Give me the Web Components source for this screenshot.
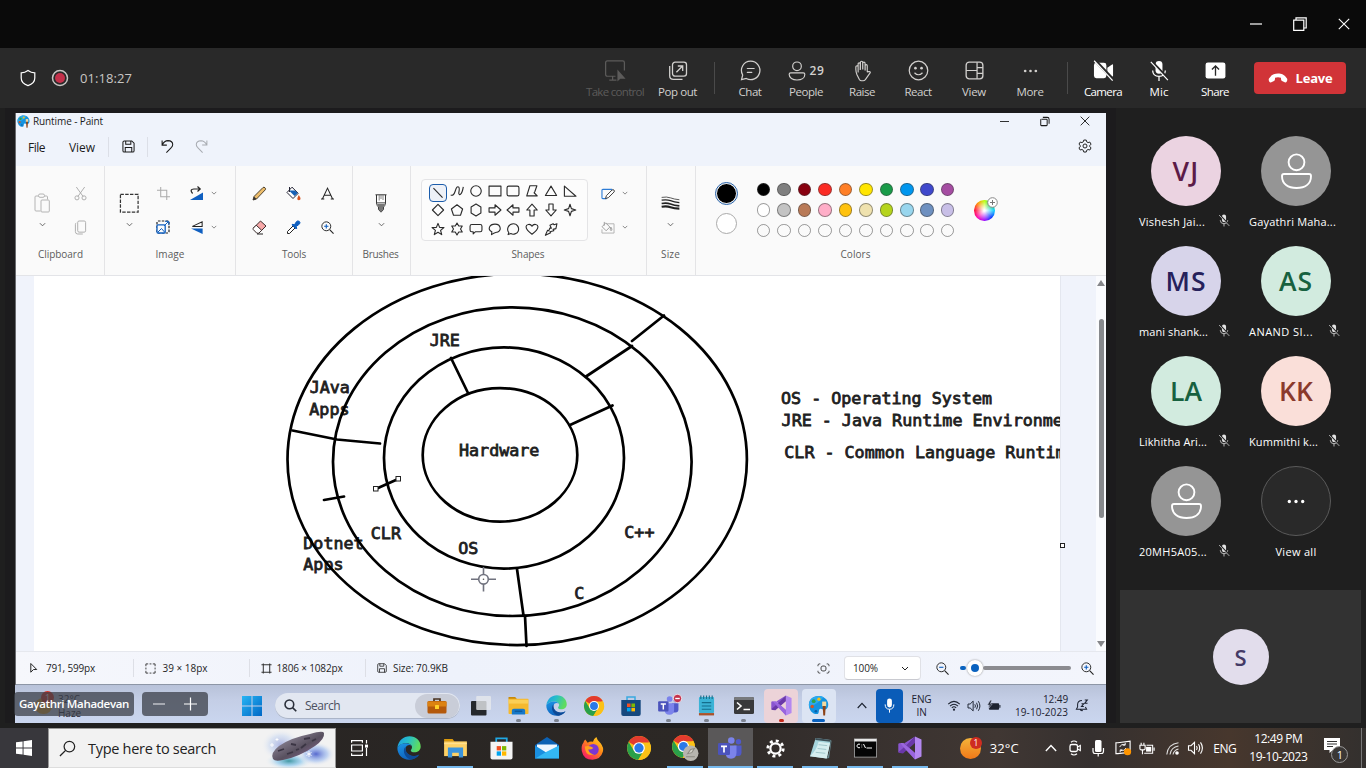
<!DOCTYPE html>
<html lang="en">
<head>
<meta charset="utf-8">
<title>Meeting</title>
<style>
html,body{margin:0;padding:0}
body{width:1366px;height:768px;overflow:hidden;background:#1f1f1f;font-family:"Open Sans","Noto Sans",sans-serif;font-size:12px;color:#fff}
</style>
</head>
<body>
<meeting-app></meeting-app>
<script>
const CHROME = `<circle cx="12" cy="12" r="11" fill="#fbc116"/><path d="M12 12L2.5 6.5A11 11 0 0 1 21.6 6.6Z" fill="#e33b2e"/><path d="M2.5 6.5A11 11 0 0 0 11.3 23L16.5 14.5 12 17 7 14Z" fill="#29a04a"/><path d="M12 7H21.8A11 11 0 0 1 11.3 23L16.5 14.5Z" fill="#fbc116"/><circle cx="12" cy="12" r="5.4" fill="#fff"/><circle cx="12" cy="12" r="4.3" fill="#2b79e8"/>`;
const STAR4 = 'M10 1.8L12 8 18.2 10 12 12 10 18.2 8 12 1.8 10 8 8Z';
const ICONS = {
  min: ['0 0 12 12', '<path d="M0 6H12" stroke="currentColor" stroke-width="1.2"/>'],
  restore: ['0 0 14 14', '<path d="M.7 3.2H10.8V13.3H.7ZM3 3V.8H13.2V11H11" fill="none" stroke="currentColor" stroke-width="1.2"/>'],
  restore11: ['0 0 12 12', '<path d="M3 3.6H8.2Q8.9 3.6 8.9 4.3V9.8Q8.9 10.5 8.2 10.5H2.6Q1.9 10.5 1.9 9.8V4.3Q1.9 3.6 2.6 3.6M4.2 1.5H9Q11 1.5 11 3.5V8.4" fill="none" stroke="currentColor" stroke-width="1.1"/>'],
  close: ['0 0 12 12', '<path d="M.8.8L11.2 11.2M11.2.8L.8 11.2" stroke="currentColor" stroke-width="1.1"/>'],
  shield: ['0 0 16 18', '<path d="M8 1.5C10 3 12 3.8 14.8 3.9V9C14.8 13 12 15.3 8 16.6 4 15.3 1.2 13 1.2 9V3.9C4 3.8 6 3 8 1.5Z" fill="none" stroke="currentColor" stroke-width="1.2"/>'],
  rec: ['0 0 18 18', '<circle cx="9" cy="9" r="7.5" fill="none" stroke="#c8c6c4" stroke-width="1.5"/><circle cx="9" cy="9" r="5" fill="#c4314b"/>'],
  control: ['0 0 24 24', '<path d="M12 18H3.5Q1.7 18 1.7 16.2V3.8Q1.7 2 3.5 2H19.5Q21.3 2 21.3 3.8V12M9 18V22M5.5 22H13" fill="none" stroke="currentColor" stroke-width="1.3"/><path d="M14 11V23.5L17 20.5H22.5Z" fill="currentColor"/>'],
  popout: ['0 0 20 20', '<rect x="4.5" y="1.2" width="14" height="14" rx="2.6" fill="none" stroke="currentColor" stroke-width="1.3"/><path d="M1.7 5V14.7Q1.7 18.4 5.4 18.4H14.5M8.4 11.2L14.6 5M9.8 5H14.7V9.9" fill="none" stroke="currentColor" stroke-width="1.3"/>'],
  chat: ['0 0 22 22', '<path d="M11.3 1.3A9.6 9.6 0 1 1 6.6 19.3L1.6 20.6 2.8 15.7A9.6 9.6 0 0 1 11.3 1.3ZM7.7 8.9H14.8M7.7 13H12.3" fill="none" stroke="currentColor" stroke-width="1.3" stroke-linecap="round"/>'],
  people: ['0 0 20 22', '<circle cx="10" cy="5.8" r="4.8" fill="none" stroke="currentColor" stroke-width="1.3"/><path d="M3 13H17Q18.7 13 18.7 14.6C18.7 18.8 15 21 10 21S1.3 18.8 1.3 14.6Q1.3 13 3 13Z" fill="none" stroke="currentColor" stroke-width="1.3"/>'],
  raise: ['0 0 20 23', '<path d="M5.4 13V4.2Q5.4 3 6.5 3T7.6 4.2V10.5M7.8 10V2.4Q7.8 1.2 9 1.2T10.2 2.4V10M10.3 10V3.4Q10.3 2.2 11.5 2.2T12.7 3.4V11M12.8 11V6Q12.8 4.8 13.9 4.8T15 6V12.4L17 12Q18.8 12.3 18 13.5L13 20.5Q12 21.8 10.6 21.8H9Q7.5 21.8 6.7 20.5L4.2 15.5Q3 12.5 3 10V7Q3 6 4.2 6L5.4 6.3" fill="none" stroke="currentColor" stroke-width="1.2" stroke-linejoin="round"/>'],
  react: ['0 0 22 22', '<circle cx="11" cy="11" r="9.7" fill="none" stroke="currentColor" stroke-width="1.3"/><circle cx="7.8" cy="8.6" r="1.4" fill="currentColor"/><circle cx="14.2" cy="8.6" r="1.4" fill="currentColor"/><path d="M6.8 13.3Q11 17.6 15.2 13.3" fill="none" stroke="currentColor" stroke-width="1.3"/>'],
  view: ['0 0 20 20', '<rect x="1.2" y="1.2" width="17.6" height="17.6" rx="3.3" fill="none" stroke="currentColor" stroke-width="1.4"/><path d="M12.7 1.2V18.8M1.2 10H12.7M12.7 7H18.8M12.7 13H18.8" stroke="currentColor" stroke-width="1.3"/>'],
  dots: ['0 0 24 6', '<circle cx="4" cy="3" r="2" fill="currentColor"/><circle cx="12" cy="3" r="2" fill="currentColor"/><circle cx="20" cy="3" r="2" fill="currentColor"/>'],
  camoff: ['0 0 24 22', '<path d="M4.5 3H12.5Q15 3 15 5.5V16.5Q15 19 12.5 19H4.5Q2 19 2 16.5V5.5Q2 3 4.5 3ZM16 8.2L21 4.6Q22 4.2 22 5.2V16.8Q22 17.8 21 17.4L16 13.8Z" fill="currentColor"/><path d="M3.5.8L23.2 21.6" stroke="#292929" stroke-width="3.2"/><path d="M2.2.8L21.6 21.6" stroke="currentColor" stroke-width="1.3"/>'],
  micoff: ['0 0 22 24', '<rect x="7.2" y="1" width="7.6" height="14" rx="3.8" fill="currentColor"/><path d="M4 11.5Q4.3 18 11 18T18 11.5M11 18V23" fill="none" stroke="currentColor" stroke-width="1.4"/><path d="M3.5 1.8L22 21.5" stroke="#242424" stroke-width="2.6"/><path d="M2 2L20.8 22" stroke="currentColor" stroke-width="1.3"/>'],
  share: ['0 0 22 18', '<rect x=".5" y=".5" width="21" height="17" rx="2.4" fill="currentColor"/><path d="M11 14.5V4.5M7.2 8L11 4.2 14.8 8" fill="none" stroke="#292929" stroke-width="1.4"/>'],
  phone: ['0 0 20 10', '<path d="M1 5.500C3.500 1.500 6.500.5 10 .5S16.500 1.500 19 5.500Q19.800 7 18.500 9Q17.800 9.800 16.700 9.300L14 8Q13 7.400 13 6L13 4.800Q10 3.800 7 4.800L7 6Q7 7.400 6 8L3.300 9.300Q2.200 9.800 1.500 9Q.2 7 1 5.500Z" fill="currentColor"/>'],
  paint: ['0 0 24 24', '<path d="M12 1C5.500 1 1 5.500 1 11C1 17 5 21.800 10 21.800C13.500 21.800 11.500 17.500 13.500 16C15.500 14.700 18 18 21 16C24 14 23.700 9 21.300 5.500C19 2.500 16 1 12 1Z" fill="#1593e0"/><path d="M12 1C5.500 1 1 5.500 1 11C1 12 1.200 13 1.500 14Q10 11 18 2.600Q15.500 1 12 1Z" fill="#2aa9ee"/><circle cx="6.500" cy="7" r="2.200" fill="#2fa14c"/><circle cx="12.500" cy="4.800" r="1.900" fill="#f2c218"/><circle cx="4.800" cy="13" r="2" fill="#d4531f"/><circle cx="9" cy="18.500" r="1.500" fill="#0b5fa8"/><path d="M16.200 7.500H20.800V13H16.200Z" fill="#f3d9a0"/><path d="M16.700 12.500H20.300L19.500 23.500H17.500Z" fill="#8d4318"/>'],
  save: ['0 0 14 14', '<path d="M1 2.500Q1 1 2.500 1H10.500L13 3.500V11.500Q13 13 11.500 13H2.500Q1 13 1 11.500ZM4 1V4.500H9.500V1M3.500 13V8H10.500V13" fill="none" stroke="currentColor" stroke-width="1.100"/>'],
  undo: ['0 0 14 15', '<path d="M1.200 1V6H6.300M1.400 5.600Q3.500 1.400 7.500 1.200 12.600 1.400 12.600 5.400 12.600 7 11.300 8.400L5.800 14" fill="none" stroke="currentColor" stroke-width="1.150"/>'],
  redo: ['0 0 14 15', '<path d="M12.800 1V6H7.700M12.600 5.600Q10.500 1.400 6.500 1.200 1.400 1.400 1.400 5.400 1.400 7 2.700 8.400L8.200 14" fill="none" stroke="currentColor" stroke-width="1.100"/>'],
  gear: ['0 0 16 16', '<path d="M6.600 1.200H9.400L9.900 3.200 11.500 4.100 13.500 3.500 14.900 5.900 13.500 7.300V8.800L14.900 10.200 13.500 12.600 11.500 12 9.900 12.900 9.400 14.900H6.600L6.100 12.900 4.500 12 2.500 12.600 1.100 10.200 2.500 8.800V7.300L1.100 5.900 2.500 3.500 4.500 4.100 6.100 3.200Z" fill="none" stroke="currentColor" stroke-width="1.100" stroke-linejoin="round"/><circle cx="8" cy="8" r="2.300" fill="none" stroke="currentColor" stroke-width="1.100"/>'],
  paste: ['0 0 16 20', '<path d="M5 3H2Q1 3 1 4V17Q1 18 2 18H6.500M10 3H12.500Q13.500 3 13.500 4V6.500" fill="none" stroke="#b4b4b4"/><rect x="4.500" y="1" width="6" height="3.300" rx="1.500" fill="#fafafa" stroke="#b4b4b4"/><rect x="7" y="7" width="8.300" height="12" rx="1" fill="#fafafa" stroke="#b4b4b4"/>'],
  cut: ['0 0 14 16', '<path d="M2.500 1L9.800 11.200M11.500 1L4.200 11.200" stroke="#aaa"/><circle cx="3.200" cy="12.700" r="2.200" fill="none" stroke="#aaa"/><circle cx="10.800" cy="12.700" r="2.200" fill="none" stroke="#aaa"/>'],
  copy: ['0 0 14 16', '<rect x="4" y="1" width="8.500" height="12" rx="1.500" fill="none" stroke="#aaa"/><path d="M2.500 3Q1.500 3.500 1.500 5V12.500Q1.500 15 4 15H9.500" fill="none" stroke="#aaa"/>'],
  chev: ['0 0 8 5', '<path d="M1 1L4 4 7 1" fill="none" stroke="currentColor"/>'],
  chevup: ['0 0 14 9', '<path d="M1 8L7 1.500 13 8" fill="none" stroke="currentColor" stroke-width="1.600"/>'],
  select: ['0 0 22 22', '<rect x="1.500" y="1.500" width="18.500" height="18.500" fill="none" stroke="#333" stroke-width="1.300" stroke-dasharray="3.600 1.400"/>'],
  crop: ['0 0 14 14', '<path d="M4 0V10.500H14M0 3.500H10.500V14" fill="none" stroke="#aaa" stroke-width="1.100"/>'],
  resize: ['0 0 14 14', '<rect x="1" y="1" width="12" height="12" rx="1" fill="none" stroke="#222" stroke-width="1.200" stroke-dasharray="2.500 1.300"/><rect x="1" y="4.800" width="8.200" height="8.200" rx="1" fill="#fafafa" stroke="#0f5fc0" stroke-width="1.300"/><path d="M2 12L5.500 8.500 8.500 12M8 6L12.500 1.500M9 1.300H12.800V5" fill="none" stroke="#0f5fc0"/>'],
  rotate: ['0 0 14 14', '<path d="M13 6.500V14H0Z" fill="#0f5fc0"/><path d="M2.600 7.500Q-1 3.300 4 3H10M7.500.5L10.200 3 7.500 5.500" fill="none" stroke="#222" stroke-width="1.200"/>'],
  flip: ['0 0 14 14', '<path d="M12 .9V5.800H1.500Z" fill="none" stroke="#222" stroke-width="1.100"/><path d="M12.500 8V14L0 8Z" fill="#0f5fc0"/>'],
  pencil: ['0 0 15 15', '<path d="M1 14L2 10.500 11 1.500Q12 .7 13 1.800 14 2.800 13.300 3.800L4.500 13Z" fill="#edbd6b" stroke="#3b3222" stroke-width=".9"/><path d="M1 14L2 10.500 4.500 13Z" fill="#333"/>'],
  bucket: ['0 0 15 15', '<path d="M6 1.200L12.200 7.300 7 12.500 1 6.500Z" fill="#fff" stroke="#223" stroke-width="1"/><path d="M3 4.600L8.500 10 11.800 7 9 4.500Z" fill="#1560b4"/><path d="M3.500 1V6" stroke="#223"/><path d="M12.800 9Q15 12 14.300 13.500 12.800 15 11.400 13.500 11 12 12.800 9Z" fill="#d9531e"/>'],
  letterA: ['0 0 14 14', '<path d="M1.500 13L7 1.200 12.500 13M3.400 9H10.600M0 13H3.500M10.500 13H14" fill="none" stroke="#222" stroke-width="1.100"/>'],
  eraser: ['0 0 15 15', '<path d="M8.500 1L14 6 7 13 1.500 8Z" fill="#f7a8a8" stroke="#3a2b2b"/><path d="M4.200 5.200L9.700 10.300 6.800 13.200H4.800L1.200 9.500Q.8 8.700 1.400 8Z" fill="#fff" stroke="#3a2b2b"/><path d="M5 14H11" stroke="#222"/>'],
  picker: ['0 0 15 15', '<path d="M7 6L1.500 11.500V13.500H3.500L9 8Z" fill="#fff" stroke="#222"/><path d="M6 4.800L10.200 9 11 8 9.800 6.800 13.500 4Q14.600 2.500 13.200 1.300 11.500.4 10.500 1.600L8.200 5.200 7 4Z" fill="#0f5fc0" stroke="#0f5fc0"/>'],
  zoomin: ['0 0 14 14', '<circle cx="5.700" cy="5.700" r="4.800" fill="none" stroke="#222"/><path d="M9.300 9.300L13.500 13.500" stroke="#222" stroke-width="1.200"/><path d="M5.700 3.400V8M3.400 5.700H8" stroke="#0f5fc0" stroke-width="1.200"/>'],
  zoomout: ['0 0 14 14', '<circle cx="5.700" cy="5.700" r="4.800" fill="none" stroke="#222"/><path d="M9.300 9.300L13.500 13.500" stroke="#222" stroke-width="1.200"/><path d="M3.400 5.700H8" stroke="#0f5fc0" stroke-width="1.200"/>'],
  brush: ['0 0 12 19', '<path d="M.5.800H11.500M1.500 1V9Q2 12 3.500 13V15.500L6 18.200 8.500 15.500V13Q10 12 10.500 9V1" fill="#fff" stroke="#333"/><path d="M1.800 8.500H10.200M4.200 1V6.500M6 1V5M8 1V6" stroke="#666" stroke-width=".8"/><path d="M2 9.500H10Q9.500 12 8.200 13V15.500L6 18 3.800 15.500V13Q2.500 12 2 9.500Z" fill="#777"/>'],
  outline: ['0 0 15 14', '<path d="M6 12.500H2Q1 12.500 1 11.500V3.500Q1 2.500 2 2.500H12" fill="none" stroke="#2d7cd6" stroke-width="1.200"/><path d="M4.800 12.500L5.800 9.300 11.800 3.300Q13 2.400 14 3.400 14.800 4.500 14 5.400L8 11.400Z" fill="#fff" stroke="#333"/>'],
  fill: ['0 0 15 14', '<path d="M6 3H14V13H1V9" fill="none" stroke="#b0b0b0"/><path d="M5 2L9.500 6.500 5.500 10.500 1.200 6.200ZM3.500 1V5M10.500 6.500Q12.500 9 11.500 10 10.300 10.500 9.800 9.500Z" fill="none" stroke="#999"/>'],
  size: ['0 0 20 15', '<path d="M.5 1.500Q6 .5 10 2T19.500 4" stroke-width=".8" stroke="#222" fill="none"/><path d="M.5 4.500Q6 3.500 10 5T19.500 7" stroke-width="1.300" stroke="#222" fill="none"/><path d="M.5 8Q6 7 10 8.500T19.500 10.500" stroke-width="1.800" stroke="#222" fill="none"/><path d="M.5 11.500Q6 10.500 10 12T19.500 13.500" stroke-width="2.200" stroke="#222" fill="none"/>'],
  cursor: ['0 0 10 13', '<path d="M2 1.500L8.600 8.200H5L2 11.200Z" fill="none" stroke="#222" stroke-width="1.100"/>'],
  selsmall: ['0 0 12 12', '<path d="M1 3.500V1H3.500M8.500 1H11V3.500M11 8.500V11H8.500M3.500 11H1V8.500M5 1H7M5 11H7M1 5V7M11 5V7" fill="none" stroke="#333"/>'],
  canvas: ['0 0 12 12', '<path d="M2.500.5V11.500M9.500.5V11.500M.5 2H11.500M.5 10H11.500" stroke="#333" stroke-width="1.100"/>'],
  fit: ['0 0 14 12', '<path d="M1 3.500V2.500Q1 1 2.500 1H3.500M10.500 1H11.500Q13 1 13 2.500V3.500M13 8.500V9.500Q13 11 11.500 11H10.500M3.500 11H2.500Q1 11 1 9.500V8.500" fill="none" stroke="#333"/><rect x="4.300" y="3.300" width="5.400" height="5.400" rx="2" fill="none" stroke="#333"/>'],
  person: ['0 0 31 36', '<circle cx="15.500" cy="9.300" r="7.900" fill="none" stroke="#fff" stroke-width="1.900"/><path d="M3 21H28Q30 21 30 23C30 31 24 35 15.500 35S1 31 1 23Q1 21 3 21Z" fill="none" stroke="#fff" stroke-width="1.900"/>'],
  win11: ['0 0 20 20', '<defs><linearGradient id="g" x2="1" y2="1"><stop stop-color="#28b5f4"/><stop offset="1" stop-color="#0067c5"/></linearGradient></defs><path d="M0 0H9.500V9.500H0ZM10.500 0H20V9.500H10.500ZM0 10.500H9.500V20H0ZM10.500 10.500H20V20H10.500Z" fill="url(#g)"/>'],
  win10: ['0 0 17 17', '<path d="M0 2.500L7 1.500V8H0ZM8 1.300L17 0V8H8ZM0 9H7V15.500L0 14.500ZM8 9H17V17L8 15.700Z" fill="#fff"/>'],
  search: ['0 0 14 14', '<circle cx="5.800" cy="5.800" r="4.700" fill="none" stroke="currentColor" stroke-width="1.700"/><path d="M9.200 9.200L13.200 13.200" stroke="currentColor" stroke-width="1.800"/>'],
  search10: ['0 0 18 18', '<circle cx="11" cy="7" r="5.600" fill="none" stroke="currentColor" stroke-width="1.300"/><path d="M7 11L1 17" stroke="currentColor" stroke-width="1.400"/>'],
  bag: ['0 0 20 16', '<path d="M7 3V1H13V3" fill="none" stroke="#4a3320" stroke-width="1.700"/><rect x=".5" y="3" width="19" height="12.500" rx="1.500" fill="#b4590b"/><path d="M.5 3.500H19.500V8.500H.5Z" fill="#dc8211"/><rect x="8" y="7" width="4" height="4" rx=".6" fill="#ffd028"/>'],
  tasks11: ['0 0 20 20', '<rect y="5" width="15.500" height="14.500" rx="1" fill="#25282c"/><rect x="5.200" y="0" width="14.800" height="14" rx="1" fill="#e6e8ec" opacity=".8"/>'],
  folder: ['0 0 22 20', '<path d="M.5 1H7.500L9.500 3.500H.5Z" fill="#c88a08"/><rect x=".5" y="3" width="21" height="16" rx=".8" fill="#f5b92e"/><path d="M.5 4H21V8H.5Z" fill="#fbcf55"/><path d="M4 19.500V15.500Q4 13.500 6 13.500H16Q18 13.500 18 15.500V19.500Z" fill="#1678c8"/><path d="M7 16H15" stroke="#0d4b86"/>'],
  folder10: ['0 0 24 20', '<path d="M0 0H9L11 3H0Z" fill="#dc9a0c"/><path d="M0 2.500H24V18H0Z" fill="#fdd165"/><path d="M0 4H24V5.500H0Z" fill="#ffe090"/><path d="M4 19.500V9H20V19.500H15.500V14.500H8.500V19.500Z" fill="#3a94dc"/>'],
  edge: ['0 0 24 24', '<defs><linearGradient id="a" x2="1" y2=".3"><stop stop-color="#1c9be6"/><stop offset=".5" stop-color="#27bfc8"/><stop offset="1" stop-color="#5fdc5f"/></linearGradient><linearGradient id="b" y2="1" x2=".4"><stop stop-color="#1b95e6"/><stop offset="1" stop-color="#0f62bd"/></linearGradient></defs><path d="M.4 11.500C1.500 4.500 6.500.3 12.500.3C19 .3 23.700 5 23.700 10.500C23.700 14.500 20.500 16.300 17.500 16.300C15 16.300 13.600 15.400 13.800 14.200C14 13.400 15 13 15 11.200C15 9 12.500 7.300 9.500 7.300C5 7.300 2 9 .4 11.500Z" fill="url(#a)"/><path d="M.4 11.500C2 8.800 5.500 7.200 9.300 7.300C12 7.500 14 8.600 14.700 10C13.500 8.800 11.500 8.700 10 9.800C8.500 11 8.200 13 8.800 15C10 18.500 13.500 20.300 17 20.300C19 20.300 21 19.500 22.300 18.600C20 22 16 24 12 23.800C5.500 23.700 0 18.500.4 11.500Z" fill="url(#b)"/><path d="M8.600 10.500C6.500 12.500 6.300 16 8 19C9.500 21.500 11.500 23 14 23.600C17.500 23.200 20.500 21.300 22.300 18.600C18 21 12.500 20 10 16.800C8.500 14.800 8.200 12.500 8.600 10.500Z" fill="#0d4a96"/>'],
  chrome: ['0 0 24 24', CHROME],
  chrome2: ['0 0 27 27', CHROME + '<circle cx="19" cy="18.500" r="7.500" fill="#b7b5af"/><path d="M16 19L19 15 22.500 14 20 18ZM14.500 22H23" stroke="#8b8981" fill="#d6d4cc"/>'],
  store11: ['0 0 20 20', '<path d="M6 4V1H14V4" fill="none" stroke="#3aa9e0" stroke-width="1.500"/><path d="M.3 4H19.700V18Q19.700 20 17.700 20H2.300Q.3 20 .3 18Z" fill="#16487e"/><path d="M6 7.500H9.600V11H6Z" fill="#f25022"/><path d="M10.400 7.500H14V11H10.400Z" fill="#7fba00"/><path d="M6 11.800H9.600V15.400H6Z" fill="#00a4ef"/><path d="M10.400 11.800H14V15.400H10.400Z" fill="#ffb900"/>'],
  store10: ['0 0 24 24', '<path d="M6.500 6V1.500H17.500V6" fill="none" stroke="#20a8e4" stroke-width="1.800"/><path d="M.5 5H23.500V21.500Q23.500 23.500 21.500 23.500H2.500Q.5 23.500 .5 21.500Z" fill="#f4f4f4"/><path d="M7 9.500H11.500V14H7Z" fill="#f25022"/><path d="M12.500 9.500H17V14H12.500Z" fill="#7fba00"/><path d="M7 15H11.500V19.500H7Z" fill="#00a4ef"/><path d="M12.500 15H17V19.500H12.500Z" fill="#ffb900"/>'],
  teams: ['0 0 24 22', '<circle cx="20.500" cy="4.800" r="2.700" fill="#5059c9"/><circle cx="13.300" cy="3.500" r="3.300" fill="#7b83eb"/><path d="M16 8.500H23.500V15.500Q23.500 19 20 19H16Z" fill="#5059c9"/><path d="M7.500 8.500H18.500V15.500Q18.500 21.700 13 21.700T7.500 15.500Z" fill="#7b83eb"/><rect y="6" width="12" height="12" rx="1.200" fill="#4b53bc"/><path d="M3 9.300H9M6 9.300V15.500" stroke="#fff" stroke-width="1.700"/>'],
  noentry: ['0 0 10 10', '<circle cx="5" cy="5" r="4.600" fill="#c4314b" stroke="#fff" stroke-width=".8"/><path d="M2.500 5H7.500" stroke="#fff" stroke-width="1.500"/>'],
  notepad11: ['0 0 18 22', '<rect x="1" y="2" width="16" height="17" rx="1" fill="#3bb3d6"/><path d="M1 19H17V21.500H1Z" fill="#a9532c"/><path d="M4 8H14M4 11.500H14M4 15H14" stroke="#146d8c" stroke-width="1.200"/><path d="M3 .5V4M6 .5V4M9 .5V4M12 .5V4M15 .5V4" stroke="#1d6f8b" stroke-width="1.200"/>'],
  terminal: ['0 0 20 17', '<rect width="20" height="17" rx="1.500" fill="#38393b"/><path d="M0 1.500Q0 0 1.500 0H18.500Q20 0 20 1.500V3H0Z" fill="#77797c"/><path d="M3 5.500L7 9 3 12.500M9.500 12.500H16" fill="none" stroke="#fff" stroke-width="1.600"/>'],
  vs: ['0 0 24 24', '<path d="M17 .5L23.500 3.500V20.500L17 23.500Z" fill="#b488f0"/><path d="M17 .5L5 14.500 2 17 .3 16.200V7.800L2 7 5.500 9.800 17 23.500V17L6 7.500Z" fill="#8a55d0"/><path d="M17 .5V7L5 17.500 2 17 .3 16.200 8 9.500Z" fill="#6a38a8"/><path d="M17 23.500V17L5.500 7 2 7 8 14Z" fill="#9a66df"/>'],
  mail: ['0 0 24 22', '<path d="M0 8L12 0 24 8V21.500H0Z" fill="#0c62b4"/><path d="M2 7.500H22V14L12 17 2 14Z" fill="#eef7ff"/><path d="M0 8.500L12 16 0 21.500Z" fill="#1a8fe0"/><path d="M24 8.500V21.500H0L12 14.500Z" fill="#33b8f5"/>'],
  firefox: ['0 0 24 24', '<defs><linearGradient id="f" x1="1" x2=".2" y2="1"><stop stop-color="#ffe226"/><stop offset=".45" stop-color="#ff8a16"/><stop offset="1" stop-color="#f5156c"/></linearGradient></defs><path d="M4.500 2.500L7 6Q9.500 4 12.500 5 13 2 16 0 17 4 20.500 6.500 24 11 22.800 15.500 20.500 23.500 12 23.800 2.500 23.500.8 14.500 0 9 2.500 6 2.800 4 4.500 2.500Z" fill="url(#f)"/><circle cx="12.700" cy="13" r="5.800" fill="#7a36d2"/><path d="M4 10Q9 8.500 13 11.500 10.500 13.500 7.500 13 9 18 14 18 9 20 6 17 4 14 4 10Z" fill="#ffa01c"/>'],
  settings10: ['0 0 20 20', '<g fill="none" stroke="#fff"><circle cx="10" cy="10" r="5.400" stroke-width="2.300"/><circle cx="10" cy="10" r="8.100" stroke-width="3" stroke-dasharray="3.100 3.260"/></g>'],
  notepad10: ['0 0 24 24', '<path d="M7 1L22.500 3 18.500 22.500 1 20Z" fill="#a6d4dc"/><path d="M7 1L22.500 3 22 5 6.500 3Z" fill="#3d5058"/><path d="M10 5L22 6.500 18.500 22.500 1 20Q8 14 10 5Z" fill="#d6eef0"/><path d="M18.500 22.500Q22 16 22.500 3L23.500 4 21 22Z" fill="#668890"/><path d="M10 8L19 9M9 12L18 13M7 16L17 17" stroke="#87b4ba" stroke-width=".7"/>'],
  cmd: ['0 0 23 19', '<rect x=".4" y=".4" width="22.200" height="18.200" fill="#050505" stroke="#a8a8a8" stroke-width=".8"/><path d="M.5.5H22.500V3H.5Z" fill="#e8e8e8"/><path d="M6 5.700H4Q3 6.500 3 7.500T4 9.200H6M7.500 6.500H8.200M7.500 8.500H8.200M9.500 5.500L11.500 9.500M12.500 9.500H18" stroke="#fff" fill="none"/>'],
  taskview: ['0 0 17 16', '<path d="M.6 2.800V.6H11.400V2.800M.6 5H11.400V11H.6ZM.6 13.200V15.400H11.400V13.200M15.500 0V3.500M15.500 8V16" fill="none" stroke="#fff" stroke-width="1.200"/><rect x="14" y="4.600" width="3" height="3" fill="#fff"/>'],
  mic: ['0 0 14 20', '<rect x="3.800" y=".5" width="6.400" height="12" rx="3.200" fill="currentColor"/><path d="M1.200 8.500Q1.200 15 7 15T12.800 8.500M7 15V19.500" fill="none" stroke="currentColor" stroke-width="1.300"/>'],
  wifi: ['0 0 14 12', '<path d="M.7 4.500Q7-1.500 13.300 4.500M2.600 6.600Q7 2.500 11.400 6.600M4.600 8.600Q7 6.300 9.400 8.600" fill="none" stroke="currentColor" stroke-width="1.100"/><circle cx="7" cy="10.500" r="1.200" fill="currentColor"/>'],
  vol: ['0 0 16 14', '<path d="M1 4.700H3.500L7 1.300V12.700L3.500 9.300H1Z" fill="none" stroke="currentColor" stroke-width="1.100"/><path d="M9 5Q10.400 7 9 9M11 3.200Q13.400 7 11 10.800M13 1.400Q16.800 7 13 12.600" fill="none" stroke="currentColor" stroke-width="1.100"/>'],
  batt11: ['0 0 15 11', '<rect x="2" y="3" width="11" height="7" rx="1" fill="currentColor"/><path d="M13.800 5V8" stroke="currentColor" stroke-width="1.200"/><path d="M3.500 0L.5 5H3L2 8.500 5.500 4H3.500L5 0Z" fill="currentColor" stroke="#c8d0e6" stroke-width=".5"/>'],
  bell: ['0 0 14 14', '<path d="M7.500 1.500Q2.800 1.700 2.800 6V8.500L1.500 11H12.500L11.200 8.500M5.500 11Q6 13 8.500 12.500M7 5H9.500L7 8H9.500M10.500 1H13.300L10.500 4.500H13.500" fill="none" stroke="currentColor" stroke-width="1.100"/>'],
  meet: ['0 0 12 16', '<rect x="1" y="4.500" width="7.500" height="7" rx="1.800" fill="none" stroke="#fff" stroke-width="1.300"/><path d="M8.500 7L11.300 5.500V10.500L8.500 9M2 2.200Q5-.2 8 2.200M2 13.800Q5 16.200 8 13.800" fill="none" stroke="#fff" stroke-width="1.200"/>'],
  micw: ['0 0 12 17', '<rect x="3" y="0" width="6.500" height="12" rx="1.500" fill="#fff"/><path d="M1 8V11Q1 13.500 3 13.500H9.500Q11.500 13.500 11.500 11V8M6.200 13.500V16.500" fill="none" stroke="#fff" stroke-width="1.200"/>'],
  sync: ['0 0 18 16', '<path d="M1 2.500H3L16 .8V12.500L3 14H1Z" fill="none" stroke="#fff" stroke-width="1.200"/><path d="M5 7Q6.500 3.500 10.500 4.500M10.800 2.500V5H8.300M11.500 8Q10 11.500 6 10.500M5.500 12.500V10H8" fill="none" stroke="#fff"/><circle cx="13.300" cy="12" r="3.800" fill="#ff9500"/>'],
  plug: ['0 0 17 13', '<path d="M1 3H6.500V6.500Q6.500 8 5 8H2.500Q1 8 1 6.500ZM2.300 3V.5M5.200 3V.5M3.700 8V12.500" fill="none" stroke="#fff" stroke-width="1.200"/><path d="M8 3H14.500V11.500H5.500" fill="none" stroke="#fff" stroke-width="1.100"/><rect x="7.500" y="4.800" width="5.500" height="5" fill="#fff"/><path d="M16 5.500V9" stroke="#fff" stroke-width="1.300"/>'],
  wifi10: ['0 0 13 13', '<path d="M.8 12.500Q2 2 12.500.8M4 12.500Q5 5.200 12.500 4M7 12.500Q7.800 8.200 12.500 7" fill="none" stroke="#ddd" stroke-width="1.100"/><circle cx="11" cy="11" r="1.800" fill="#fff"/>'],
  note: ['0 0 16 15', '<path d="M0 0H16V12H9L5.500 15V12H0Z" fill="#fff"/><path d="M3 3.500H13M3 6H13M3 8.500H9" stroke="#333" stroke-width="1"/>'],
  saucer: ['0 0 72 38', '<defs><radialGradient id="h"><stop stop-color="#2f8f9c" stop-opacity=".9"/><stop offset=".5" stop-color="#8cc8ee" stop-opacity=".7"/><stop offset="1" stop-color="#f2f2f2" stop-opacity="0"/></radialGradient><radialGradient id="k"><stop stop-color="#4f62cc" stop-opacity=".95"/><stop offset=".6" stop-color="#9dbcf0" stop-opacity=".6"/><stop offset="1" stop-color="#f2f2f2" stop-opacity="0"/></radialGradient><linearGradient id="i" y2="1"><stop stop-color="#aaa3b5"/><stop offset=".55" stop-color="#58505f"/><stop offset="1" stop-color="#9a6ca6"/></linearGradient></defs><ellipse cx="18" cy="16" rx="20" ry="16" fill="url(#k)" opacity=".45"/><ellipse cx="26" cy="32" rx="24" ry="9" fill="url(#h)"/><ellipse cx="53" cy="25" rx="19" ry="12" fill="url(#k)"/><path d="M10 30Q7 24 16 17 27 9 47 5 60 1 61 4 62 10 52 17 36 28 20 31 12 33 10 30Z" fill="url(#i)"/><path d="M15 22L21 20M28 15L33 16M41 10L47 9M24 25L30 23M38 19L43 15M33 21L36 20M49 12L53 10" stroke="#3b3544" stroke-width="1.800"/><path d="M46 22V28M43.500 23.500L48.500 26.500M43.500 26.500L48.500 23.500M9 14V18M7 16H11M14 9V12M12.500 10.500H15.500" stroke="#fff" stroke-width=".9"/>'],
  s_line: ['0 0 20 20', '<path d="M3.500 3L16.500 16.500"/>'],
  s_curve: ['0 0 20 20', '<path d="M1 15.500Q5 18 7.500 10T12.500 4.500Q14 6 12.500 13C13 17 17 16 19 4"/>'],
  s_oval: ['0 0 20 20', '<circle cx="10" cy="10" r="7.500"/>'],
  s_rect: ['0 0 20 20', '<rect x="1.500" y="3" width="17" height="14"/>'],
  s_rrect: ['0 0 20 20', '<rect x="1.500" y="3" width="17" height="14" rx="2.500"/>'],
  s_poly: ['0 0 20 20', '<path d="M7 2.500H17L14 11 13 12.500 17.500 17H2.500Z"/>'],
  s_tri: ['0 0 20 20', '<path d="M10 3L18 16.500H2Z"/>'],
  s_rtri: ['0 0 20 20', '<path d="M2 3V17.500H18.500Z"/>'],
  s_dia: ['0 0 20 20', '<path d="M10 2L18 10 10 18 2 10Z"/>'],
  s_pent: ['0 0 20 20', '<path d="M10 2.500L18 8.500 15 17.500H5L2 8.500Z"/>'],
  s_hex: ['0 0 20 20', '<path d="M10 1.500L17 5.800V14.200L10 18.500 3 14.200V5.800Z"/>'],
  s_ar: ['0 0 20 20', '<path d="M1.500 7H10V2.500L18.500 10 10 17.500V13H1.500Z"/>'],
  s_al: ['0 0 20 20', '<path d="M18.500 7H10V2.500L1.500 10 10 17.500V13H18.500Z"/>'],
  s_au: ['0 0 20 20', '<path d="M7 18.500V10H2.500L10 1.500 17.500 10H13V18.500Z"/>'],
  s_ad: ['0 0 20 20', '<path d="M7 1.500V10H2.500L10 18.500 17.500 10H13V1.500Z"/>'],
  s_s4: ['0 0 20 20', '<path d="' + STAR4 + '"/>'],
  s_s5: ['0 0 20 20', '<path d="M10 2L12.300 7.700 18.500 8 13.700 12 15.300 18 10 14.600 4.700 18 6.300 12 1.500 8 7.700 7.700Z"/>'],
  s_s6: ['0 0 20 20', '<path d="M10 1.500L12.500 5.700H17.500L15 10 17.500 14.300H12.500L10 18.500 7.500 14.300H2.500L5 10 2.500 5.700H7.500Z"/>'],
  s_c1: ['0 0 20 20', '<path d="M4 3.500H16Q18.500 3.500 18.500 6V11.500Q18.500 14 16 14H9L6 17V14H4Q1.500 14 1.500 11.500V6Q1.500 3.500 4 3.500Z"/>'],
  s_c2: ['0 0 20 20', '<path d="M5.500 14C-1 11 1.500 3 10 3S21 14 11 15Q8.500 15.500 5 18Z"/>'],
  s_c3: ['0 0 20 20', '<path d="M4 15C0 10 4 2.500 10.500 2.500S19 9 17.500 13 10 18.500 7 16.500L3 18Z"/>'],
  s_heart: ['0 0 20 20', '<path d="M10 17.500C4 13 1.500 10 1.500 6.800S7.500 1.500 10 6C12.500 1.500 18.500 3.500 18.500 6.800S16 13 10 17.500Z"/>'],
  s_bolt: ['0 0 20 20', '<path d="M8.500 4.500L13 2.500 14.500 4 18.500 2.500 17 9.500 13 10.500 14 12.500 8.500 14 9.500 15.500 2 19 5 12 6.800 12.500 8.500 8.500 10.500 9Z"/>'],
};

function define(tag, html, setup) {
  const template = document.createElement('template');
  template.innerHTML = html;
  customElements.define(tag, class extends HTMLElement {
    constructor() { super(); this.attachShadow({mode: 'open'}); }
    connectedCallback() {
      if (this.shadowRoot.childNodes.length) return;
      this.shadowRoot.append(template.content.cloneNode(true));
      if (setup) setup.call(this, this.shadowRoot);
    }
  });
}

/* An icon from the table above: name, width, height. */
define('ui-icon', `<style>:host{display:inline-block;flex:none;line-height:0}svg{display:block;overflow:visible}</style>`, function (root) {
  const name = this.getAttribute('name'), w = this.getAttribute('w') || 16, h = this.getAttribute('h') || w;
  const [box, body] = ICONS[name];
  const extra = name.startsWith('s_') ? ' fill="none" stroke="#2b2b2b" stroke-width="1.6" stroke-linejoin="round"' : '';
  root.innerHTML += `<svg width="${w}" height="${h}" viewBox="${box}"${extra}>${body}</svg>`;
});

/* A line of text tracked to a given width. */
define('fit-text', `<style>:host{display:inline-block;white-space:nowrap;flex:none}span{display:inline-block}</style><span><slot></slot></span>`, function (root) {
  const span = root.querySelector('span'), w = +this.getAttribute('w');
  const n = this.textContent.length;
  if (w && n) span.style.letterSpacing = ((w - span.getBoundingClientRect().width) / n).toFixed(3) + 'px';
  if (w) this.style.width = w + 'px';
});

define('window-bar', `<style>
:host{display:flex;justify-content:flex-end;height:48px;background:#0a0a0a;color:#fff}
div{width:44px;display:grid;place-items:center}
</style><div><ui-icon name="min" w="12"></ui-icon></div><div><ui-icon name="restore" w="14"></ui-icon></div><div><ui-icon name="close" w="12"></ui-icon></div>`);

define('tool-button', `<style>
:host{display:flex;flex-direction:column;align-items:center;width:56px;height:60px;box-sizing:border-box;padding-top:10px;color:#d2d0ce;font-size:11.5px}
:host([active]){color:#fff}
:host([disabled]){color:#5c5b5a}
.i{height:25px;display:flex;align-items:center;gap:4px;font-weight:600;font-size:12px}
.l{margin-top:1px;line-height:16px}
</style><div class="i"></div><div class="l"><slot></slot></div>`, function (root) {
  const a = n => this.getAttribute(n);
  root.querySelector('.i').innerHTML = `<ui-icon name="${a('icon')}" w="${a('w')}" h="${a('h')}"></ui-icon>` + (a('count') ? `<fit-text w="15">${a('count')}</fit-text>` : '');
});

define('meeting-toolbar', `<style>
:host{display:flex;height:60px;background:#292929;box-sizing:border-box}
.left{display:flex;align-items:center;padding-left:20px;flex:1;color:#fff}
.left ui-icon+ui-icon{margin-left:15px}
.time{margin-left:11px;color:#c8c6c4;font-size:13px}
.right{display:flex}
.sep{width:1px;height:32px;margin-top:14px;background:#4a4a4a}
.leave{width:92px;height:32px;margin:14px 20px 0 10px;border-radius:4px;background:#d13438;display:flex;align-items:center;justify-content:center;gap:8px;font-weight:700;font-size:13px}
</style>
<div class="left"><ui-icon name="shield" w="16" h="18"></ui-icon><ui-icon name="rec" w="18"></ui-icon><fit-text class="time" w="52">01:18:27</fit-text></div>
<div class="right">
<tool-button disabled icon="control" w="23" h="23" style="width:62px"><fit-text w="58">Take control</fit-text></tool-button>
<tool-button icon="popout" w="20" h="20" style="width:63px"><fit-text w="39">Pop out</fit-text></tool-button>
<div class="sep" style="margin-left:5px;margin-right:7px"></div>
<tool-button icon="chat" w="21" h="21"><fit-text w="23">Chat</fit-text></tool-button>
<tool-button icon="people" w="18" h="20" count="29"><fit-text w="34">People</fit-text></tool-button>
<tool-button icon="raise" w="19" h="22"><fit-text w="26">Raise</fit-text></tool-button>
<tool-button icon="react" w="21" h="21"><fit-text w="27">React</fit-text></tool-button>
<tool-button icon="view" w="19" h="19"><fit-text w="24">View</fit-text></tool-button>
<tool-button icon="dots" w="17" h="4"><fit-text w="27">More</fit-text></tool-button>
<div class="sep" style="margin-left:9px;margin-right:7px"></div>
<tool-button active icon="camoff" w="23" h="21"><fit-text w="38">Camera</fit-text></tool-button>
<tool-button active icon="micoff" w="20" h="22"><fit-text w="19">Mic</fit-text></tool-button>
<tool-button active icon="share" w="21" h="17"><fit-text w="28">Share</fit-text></tool-button>
<div class="leave" style="margin-left:11px"><ui-icon name="phone" w="20" h="10"></ui-icon><fit-text w="37">Leave</fit-text></div>
</div>`);

define('ribbon-group', `<style>
:host{display:flex;flex-direction:column;box-sizing:border-box;height:109px;padding-top:10px;border-right:1px solid #e4e4e6}
.body{display:flex;height:68px}
.label{height:20px;display:flex;align-items:center;justify-content:center;font-size:10px;color:#5c5c5c}
</style><div class="body"><slot></slot></div><div class="label"><slot name="label"></slot></div>`);

/* Grid of two rows of small ribbon commands. */
define('icon-grid', `<style>:host{display:grid;grid-template-rows:34px 34px;grid-auto-flow:column;grid-auto-columns:34px;place-items:center;color:#666}</style><slot></slot>`);
define('big-command', `<style>:host{display:flex;flex-direction:column;align-items:center;width:38px;color:#555}
.i{display:flex;align-items:center;height:22px;margin-top:16px}ui-icon[name=chev]{margin-top:8px}</style><div class="i"><slot></slot></div><ui-icon name="chev" w="7" h="5"></ui-icon>`);

define('shape-gallery', `<style>
:host{display:grid;grid-template-columns:repeat(8,18.75px);grid-auto-rows:19px;place-items:center;box-sizing:border-box;width:167px;height:62px;margin:3px 0 0 10px;padding:3px 7px;border:1px solid #e4e4e6;border-radius:4px;background:#fcfcfc}
.on{width:16px;height:16px;display:grid;place-items:center;border:1px solid #1b5cab;border-radius:4px;background:#eef1f7}
</style>`, function (root) {
  const names = 'line curve oval rect rrect poly tri rtri dia pent hex ar al au ad s4 s5 s6 c1 c2 c3 heart bolt'.split(' ');
  root.innerHTML += names.map((n, i) => `<div class="${i ? '' : 'on'}"><ui-icon name="s_${n}" w="14"></ui-icon></div>`).join('');
});

define('color-palette', `<style>
:host{display:flex;align-items:flex-start}
.cur{display:flex;flex-direction:column;align-items:center;gap:9.500px;margin:5px 0 0 18px;width:25px}
.a{width:19.500px;height:19.500px;border-radius:50%;background:#000;border:1.500px solid #fff;outline:1.300px solid #2460a8;margin:1.500px}
.b{width:19px;height:19px;border-radius:50%;background:#fff;border:1px solid #aaa;margin-top:-2px}
.grid{display:grid;grid-template-columns:repeat(10,20.450px);grid-auto-rows:20.450px;place-items:center;margin:3.500px 0 0 14.500px}
.grid i{box-sizing:border-box;width:13.500px;height:13.500px;border-radius:50%;border:1px solid rgba(60,60,60,.5)}
.wheel{width:21px;height:21px;border-radius:50%;margin:24px 0 0 16px;position:relative;background:radial-gradient(#fff 5%,#fff0 70%),conic-gradient(#bf0,#0c4,#0cf,#03f,#90f,#f0a,#f03,#f80,#bf0)}
.plus{position:absolute;left:13px;top:-3px}
</style>
<div class="cur"><div class="a"></div><div class="b"></div></div><div class="grid"></div>
<div class="wheel"><svg class="plus" width="11" height="11" viewBox="0 0 11 11"><circle cx="5.500" cy="5.500" r="4.800" fill="#fff" stroke="#888"/><path d="M5.500 3V8M3 5.500H8" stroke="#777"/></svg></div>`, function (root) {
  const c = '#000 #7f7f7f #88000f #fb2b24 #ff7f27 #ffe500 #199b48 #0096ee #3f48cc #a54da2 #fff #c3c3c3 #b97a57 #ffaec8 #ffc20e #efe2ae #b5d41c #98d6ee #6e90c0 #c8bfe7'.split(' ');
  root.querySelector('.grid').innerHTML = Array.from({length: 30}, (_, i) => `<i style="background:${c[i] || 'transparent'}"></i>`).join('');
});

define('paint-header', `<style>
:host{display:block;height:53px;background:#eff3fb;color:#1b1b1b}
.t{display:flex;align-items:center;height:16px;padding-left:2px;font-size:10px}
.t fit-text{margin-left:3px}
.c{margin-left:auto;display:flex;margin-right:1.500px}.c div{width:40px;display:grid;place-items:center}
.m{display:flex;height:36px;align-items:center;font-size:12px}
.m ui-icon{margin-top:-2px}
.s{width:1px;height:20px;background:#dcdfe7}
</style>
<div class="t"><ui-icon name="paint" w="13"></ui-icon><fit-text w="70">Runtime - Paint</fit-text>
<div class="c"><div><ui-icon name="min" w="9"></ui-icon></div><div><ui-icon name="restore11" w="11"></ui-icon></div><div><ui-icon name="close" w="10"></ui-icon></div></div></div>
<div class="m"><fit-text w="17" style="margin-left:13px">File</fit-text><fit-text w="26" style="margin-left:24px">View</fit-text><div class="s" style="margin:0 13px 0 13px"></div><ui-icon name="save" w="13"></ui-icon><div class="s" style="margin:0 13px 0 12px"></div><ui-icon name="undo" w="13" h="15"></ui-icon><ui-icon name="redo" w="13" h="15" style="margin-left:21px;color:#a8abb1"></ui-icon><ui-icon name="gear" w="14" style="margin-left:auto;margin-right:14px"></ui-icon></div>`);

define('paint-ribbon', `<style>:host{display:flex;height:109px;background:#fafafa;border-bottom:1px solid #e3e4e8}
fit-text{font-size:10px}ribbon-group{flex:none}ribbon-group:last-child{flex:1;border-right:0}</style>
<ribbon-group style="width:90px"><big-command style="margin-left:8px"><ui-icon name="paste" w="16" h="20"></ui-icon></big-command><icon-grid style="grid-auto-columns:38px"><ui-icon name="cut" w="13" h="15"></ui-icon><ui-icon name="copy" w="13" h="15"></ui-icon></icon-grid><fit-text slot="label" w="45" style="margin-left:2px">Clipboard</fit-text></ribbon-group>
<ribbon-group style="width:131px"><big-command style="margin-left:5px;width:38px;flex:none"><ui-icon name="select" w="21"></ui-icon></big-command><icon-grid style="margin-left:-2px;flex:none"><ui-icon name="crop" w="13"></ui-icon><ui-icon name="resize" w="14"></ui-icon><ui-icon name="rotate" w="14"></ui-icon><ui-icon name="flip" w="13"></ui-icon></icon-grid><icon-grid style="grid-auto-columns:16px;margin-left:-8px;flex:none"><ui-icon name="chev" w="6" h="4"></ui-icon><ui-icon name="chev" w="6" h="4"></ui-icon></icon-grid><fit-text slot="label" w="29">Image</fit-text></ribbon-group>
<ribbon-group style="width:117px"><icon-grid style="margin-left:6.500px"><ui-icon name="pencil" w="15"></ui-icon><ui-icon name="eraser" w="15"></ui-icon><ui-icon name="bucket" w="15"></ui-icon><ui-icon name="picker" w="15"></ui-icon><ui-icon name="letterA" w="13"></ui-icon><ui-icon name="zoomin" w="13"></ui-icon></icon-grid><fit-text slot="label" w="24">Tools</fit-text></ribbon-group>
<ribbon-group style="width:58px"><big-command style="margin-left:9px"><ui-icon name="brush" w="12" h="19"></ui-icon></big-command><fit-text slot="label" w="36" style="margin-right:2px">Brushes</fit-text></ribbon-group>
<ribbon-group style="width:236px"><shape-gallery></shape-gallery><icon-grid style="margin-left:3px"><ui-icon name="outline" w="14" h="13"></ui-icon><ui-icon name="fill" w="14" h="13"></ui-icon></icon-grid><icon-grid style="grid-auto-columns:16px;margin-left:-8px"><ui-icon name="chev" w="6" h="4"></ui-icon><ui-icon name="chev" w="6" h="4"></ui-icon></icon-grid><fit-text slot="label" w="33" style="margin-right:1px">Shapes</fit-text></ribbon-group>
<ribbon-group style="width:49px"><big-command style="margin-left:4px"><ui-icon name="size" w="19" h="14"></ui-icon></big-command><fit-text slot="label" w="19" style="margin-right:1px">Size</fit-text></ribbon-group>
<ribbon-group><color-palette></color-palette><fit-text slot="label" w="30" style="margin-right:91px">Colors</fit-text></ribbon-group>`);

define('paint-canvas', `<style>
:host{display:flex;height:375px;background:#f0f3fb;position:relative}
.page{width:1025.500px;margin-left:19px;height:375px;background:#fff;overflow:hidden;box-shadow:1px 0 0 #e4e7ef}
svg{display:block}
text{font-family:"DejaVu Sans Mono","Liberation Mono",monospace;font-size:16.700px;fill:#202020;stroke:#202020;stroke-width:.8px}
.bar{margin-left:auto;width:10px;background:#fafbfe;display:flex;flex-direction:column;align-items:center}
.thumb{width:5px;height:199px;border-radius:3px;background:#87898d;margin-top:33px;margin-bottom:auto}
.up{border:4px solid transparent;border-bottom:6px solid #85868a;border-top:0;margin-top:4px}
.dn{border:4px solid transparent;border-top:6px solid #85868a;border-bottom:0;margin-bottom:4px}
.grip{position:absolute;left:1044.500px;top:267px;width:3px;height:3px;border:1px solid #222;background:#fff}
</style>
<div class="page"><svg width="1026" height="375" viewBox="34 276 1026 375">
<g class="labels"></g>
<g fill="none" stroke="#000" stroke-width="2.700" stroke-linecap="round">
<ellipse cx="517.200" cy="459.400" rx="229.700" ry="185.700"/><ellipse cx="512.300" cy="461.700" rx="179.300" ry="154.300"/><ellipse cx="504" cy="458" rx="120" ry="110.600"/><ellipse cx="500" cy="454.900" rx="77.300" ry="66.800"/>
<path d="M451 358L468 393M664 315.500L632 341M632 346L586 376.500M612.500 405.500L570 425M292.500 430.500L337 439.500 380 443.500M378 488L397 479.500M324 500L344 496.500M517 569L523.500 615.500M525 616L526.500 646"/></g>
<g fill="#fff" stroke="#222"><rect x="373.500" y="486.500" width="4.500" height="4.500"/><rect x="396" y="476.500" width="4.500" height="4.500"/></g>
<g fill="none" stroke="#70727e" stroke-width="1.600"><path d="M483.500 567V574.500M483.500 584V591.500M471 579.300H478.500M488.500 579.300H496"/><circle cx="483.500" cy="579.300" r="4.800" fill="#fff"/></g><circle cx="483.500" cy="579.300" r=".8" fill="#555"/>
</svg></div><div class="grip"></div>
<div class="bar"><div class="up"></div><div class="thumb"></div><div class="dn"></div></div>`, function (root) {
  const items = [['JRE', 429.7, 345.6], ['JAva', 309.7, 393], ['Apps', 309.3, 414.8], ['Hardware', 459, 456], ['CLR', 370.8, 539], ['OS', 458.2, 553.6], ['Dotnet', 303.3, 548.6], ['Apps', 303.3, 570.2], ['C++', 624.3, 538], ['C', 574.3, 599], ['OS - Operating System', 781, 404], ['JRE - Java Runtime Environment', 781.6, 425.7], ['CLR - Common Language Runtime', 784.3, 457.6]];
  root.querySelector('.labels').innerHTML = items.map(([t, x, y]) => `<text x="${x}" y="${y}">${t}</text>`).join('');
});

define('paint-status', `<style>
:host{display:flex;align-items:center;height:33px;background:linear-gradient(90deg,#f6f7fc,#eef2fb 40%,#f3f5fc);color:#1f1f1f;font-size:10px;border-top:1px solid #e6e8ee;box-sizing:border-box}
.s{width:1px;height:18px;background:#dddfe6}
.z{margin-left:14.500px;width:77px;height:24px;box-sizing:border-box;border:1px solid #e0e1e6;border-bottom-color:#c9cad0;border-radius:4px;background:#fff;display:flex;align-items:center;justify-content:space-between;padding:0 11px 0 8px}
.sl{display:flex;align-items:center;width:111px;height:16px;margin:0 10px 0 11px}
.sl b{height:3.500px;width:6px;border-radius:2px;background:#0a62bf}.sl i{width:8px;height:8px;border-radius:50%;background:#0a62bf;border:4px solid #fff;box-shadow:0 0 2px #888;margin:0 0 0 1px}.sl u{flex:1;height:3.500px;background:#8b8b90;border-radius:2px}
</style>
<ui-icon name="cursor" w="9" h="12" style="margin-left:14px"></ui-icon><fit-text w="49" style="margin:0 38px 0 8px">791, 599px</fit-text><div class="s"></div>
<ui-icon name="selsmall" w="11" style="margin-left:10.500px"></ui-icon><fit-text w="45" style="margin:0 41px 0 7px">39 × 18px</fit-text><div class="s"></div>
<ui-icon name="canvas" w="11" style="margin-left:11px"></ui-icon><fit-text w="66" style="margin:0 22px 0 5px">1806 × 1082px</fit-text><div class="s"></div>
<ui-icon name="save" w="10" style="margin-left:11px"></ui-icon><fit-text w="55" style="margin-left:6.500px">Size: 70.9KB</fit-text>
<ui-icon name="fit" w="13" h="11" style="margin-left:auto"></ui-icon><div class="z"><fit-text w="25">100%</fit-text><ui-icon name="chev" w="8" h="5"></ui-icon></div>
<ui-icon name="zoomout" w="13" style="margin-left:15px"></ui-icon><div class="sl"><b></b><i></i><u></u></div><ui-icon name="zoomin" w="13" style="margin-right:12px"></ui-icon>`);

define('guest-taskbar', `<style>
:host{display:flex;align-items:center;height:39px;background:linear-gradient(#b8c2d9,#c4cee6 40%,#cad6ef);color:#1c2230;font-size:10px;position:relative;border-top:1px solid #8d96a6;box-sizing:border-box;padding-top:3px}
.weather{display:flex;align-items:center;width:227px;box-sizing:border-box}
.sun{width:17px;height:16px;margin-left:20px;border-radius:9px;background:#e6a428;position:relative}
.badge{position:absolute;left:6px;top:-7px;width:13px;height:13px;border-radius:50%;background:#e03020;color:#fff;line-height:13px;text-align:center;font-size:9px}
.wt{margin-left:6px;line-height:14px}
.se{display:flex;align-items:center;width:185px;height:26px;margin-left:13px;border-radius:13px;background:#e2e7f1;color:#4b5060;font-size:12px;box-sizing:border-box;box-shadow:inset 0 -1px 0 #aab4c8}
.se ui-icon{color:#2a2f3a}
.se .bg{margin-left:auto;margin-right:1px;width:44px;height:24px;border-radius:12px;background:#c9cdd8;display:grid;place-items:center}
.apps{display:flex;margin-left:2.500px}
.app{width:37.500px;height:34px;display:grid;place-items:center;position:relative}
.app::after{content:"";position:absolute;bottom:1px;width:var(--rw,5px);height:2.500px;border-radius:2px;background:var(--run,transparent)}
.app.tile::before{content:"";position:absolute;inset:0 2px 0 1.500px;border-radius:4px;background:var(--tile)}
.app ui-icon{position:relative}
.mic{width:27px;height:34px;border-radius:4px;background:#0a5cb8;display:grid;place-items:center;color:#fff;margin:0 9px 0 9px}
.lang{width:20px;text-align:center;line-height:13px}
.clock{margin-left:14px;text-align:right;line-height:13px;width:53px;display:flex;flex-direction:column;align-items:flex-end}
.pill{position:absolute;top:6.500px;height:24px;border-radius:4px;background:rgba(61,64,74,.76);color:#fff;display:flex;align-items:center;font-size:11.500px;font-weight:600}
</style>
<div class="weather"><div class="sun"><div class="badge">1</div></div><div class="wt"><div>32°C</div><div>Haze</div></div></div>
<ui-icon name="win11" w="20"></ui-icon>
<div class="se"><ui-icon name="search" w="13" style="margin:0 8px 0 9px"></ui-icon><fit-text w="35">Search</fit-text><div class="bg"><ui-icon name="bag" w="20" h="16"></ui-icon></div></div>
<div class="apps">
<div class="app"><ui-icon name="tasks11" w="20"></ui-icon></div>
<div class="app" style="--run:#7d8492"><ui-icon name="folder" w="21" h="19"></ui-icon></div>
<div class="app" style="--run:#7d8492"><ui-icon name="edge" w="21"></ui-icon></div>
<div class="app"><ui-icon name="chrome" w="22"></ui-icon></div>
<div class="app"><ui-icon name="store11" w="20"></ui-icon></div>
<div class="app" style="--run:#7d8492"><ui-icon name="teams" w="21" h="19"></ui-icon><ui-icon name="noentry" w="9" style="position:absolute;left:23px;top:5px"></ui-icon></div>
<div class="app" style="--run:#7d8492"><ui-icon name="notepad11" w="17" h="21"></ui-icon></div>
<div class="app" style="--run:#7d8492"><ui-icon name="terminal" w="20" h="17"></ui-icon></div>
<div class="app tile" style="--run:#c42b1c;--tile:#ecd3d8"><ui-icon name="vs" w="21"></ui-icon></div>
<div class="app tile" style="--run:#0a62bf;--rw:13px;--tile:#dce4f3"><ui-icon name="paint" w="21"></ui-icon></div>
</div>
<ui-icon name="chevup" w="10" h="7" style="margin-left:19px"></ui-icon>
<div class="mic"><ui-icon name="mic" w="11" h="15"></ui-icon></div>
<div class="lang"><fit-text w="20">ENG</fit-text><fit-text w="10">IN</fit-text></div>
<ui-icon name="wifi" w="14" h="11" style="margin-left:15px"></ui-icon><ui-icon name="vol" w="14" h="12" style="margin-left:6px"></ui-icon><ui-icon name="batt11" w="14" h="11" style="margin-left:6px"></ui-icon>
<div class="clock" style="margin-left:14.500px"><fit-text w="25">12:49</fit-text><fit-text w="53">19-10-2023</fit-text></div><ui-icon name="bell" w="13" style="margin-left:7px"></ui-icon>
<div class="pill" style="left:-1px;width:120px;padding-left:5px;box-sizing:border-box"><fit-text w="110">Gayathri Mahadevan</fit-text></div>
<div class="pill" style="left:127px;width:66px;justify-content:center"><svg width="46" height="14" viewBox="0 0 46 14" fill="none" stroke="#d8d9de" stroke-width="1.200"><path d="M1 7H13"/><path d="M32 7H45M38.500 .5V13.500" stroke="#fff"/></svg></div>`);

define('shared-screen', `<style>:host{display:block;width:1091px;height:610px;margin:5px 10px 0 10px;box-sizing:border-box;background:#eff3fb;position:relative}
.edge{position:absolute;left:0;top:0;width:1px;height:572px;background:#6a6b6f}
</style><paint-header></paint-header><paint-ribbon></paint-ribbon><paint-canvas></paint-canvas><paint-status></paint-status><guest-taskbar></guest-taskbar><div class="edge"></div>`);

define('participant-tile', `<style>
:host{display:flex;flex-direction:column;align-items:center;width:110px;height:110px}
.av{width:70px;height:70px;border-radius:50%;box-sizing:border-box;display:grid;place-items:center;font-size:26.500px;font-weight:600}
.n{display:flex;align-items:center;align-self:stretch;height:18px;margin-top:6px;padding:0 11px 0 8px;font-size:11px;color:#fff}
.n ui-icon{margin-left:auto;margin-top:-1px}
</style><div class="av"></div><div class="n"></div>`, function (root) {
  const a = n => this.getAttribute(n), av = root.querySelector('.av'), n = root.querySelector('.n');
  av.style.background = a('bg'); av.style.color = a('fg');
  if (a('initials')) av.innerHTML = `<fit-text w="${a('iw')}">${a('initials')}</fit-text>`;
  else av.innerHTML = a('kind') === 'more' ? '<ui-icon name="dots" w="22" h="5"></ui-icon>' : '<ui-icon name="person" w="31" h="36"></ui-icon>';
  if (a('kind') === 'more') { av.style.border = '1px solid #5a5a5a'; n.style.justifyContent = 'center'; n.style.padding = '0'; }
  n.innerHTML = `<fit-text w="${a('nw')}">${this.textContent}</fit-text>` + (this.hasAttribute('muted') ? '<ui-icon name="micoff" w="12" h="13" style="color:#e4e4e4"></ui-icon>' : '');
});

define('roster-panel', `<style>
:host{display:block;width:250px;height:615px;background:#1f1f1f}
.g{display:grid;grid-template-columns:110px 110px;grid-auto-rows:110px;padding:28px 0 0 15px;height:454px}
.self{width:241px;height:133px;margin-left:4px;background:#323232;display:grid;place-items:center}
.self div{width:56px;height:56px;border-radius:50%;background:#e2ddec;color:#443a66;display:grid;place-items:center;font-size:22px;font-weight:600;line-height:1}
</style><div class="g">
<participant-tile initials="VJ" iw="27" bg="#ebd3e1" fg="#5c1b47" nw="66" muted>Vishesh Jai...</participant-tile>
<participant-tile kind="person" bg="#959595" nw="87">Gayathri Maha...</participant-tile>
<participant-tile initials="MS" iw="41" bg="#d7d4ea" fg="#26215b" nw="69" muted>mani shank...</participant-tile>
<participant-tile initials="AS" iw="34" bg="#d2ebdf" fg="#17613f" nw="64" muted>ANAND SI...</participant-tile>
<participant-tile initials="LA" iw="32" bg="#d2ebdf" fg="#17613f" nw="68" muted>Likhitha Ari...</participant-tile>
<participant-tile initials="KK" iw="34" bg="#fadfd9" fg="#8a3a2c" nw="69" muted>Kummithi k...</participant-tile>
<participant-tile kind="person" bg="#959595" nw="68" muted>20MH5A05...</participant-tile>
<participant-tile kind="more" bg="#292929" fg="#fff" nw="41">View all</participant-tile>
</div><div class="self"><div>S</div></div>`);

define('host-taskbar', `<style>
:host{display:flex;height:40px;margin-top:5px;background:linear-gradient(90deg,#262322,#2c2825 50%,#352f2d 60%,#403733 73%,#35302f 80%,#47372d 90%,#33302e);color:#fff;font-size:12px;align-items:center}
.start{width:48px;height:40px;display:grid;place-items:center;background:#38373c}
.se{width:288px;height:40px;box-sizing:border-box;background:#f2f2f2;border:1px solid #999;border-bottom-color:#ddd;display:flex;align-items:center;color:#222;font-size:14.500px}
.se ui-icon:last-child{margin-left:auto}
.tv{width:47.250px;padding-right:3px;display:grid;place-items:center}
.apps{display:flex;height:40px}
.app{width:45.950px;display:grid;place-items:center;position:relative}
.app:nth-child(n+8){width:45px}
.app.run::after{content:"";position:absolute;bottom:0;height:2px;width:36px;background:#76b9ed}
.app.on{background:#5a5859}.app.on::after{width:45px!important}
.w{width:21px;height:21px;border-radius:50%;background:linear-gradient(#f4b43a,#f07818);margin-left:27px;position:relative}
.w b{position:absolute;left:10px;top:-1px;width:12px;height:12px;border-radius:50%;background:#cf2c20;font-size:8.500px;line-height:12px;text-align:center;font-weight:400}
.tray{display:flex;align-items:center;color:#fff}
.clock{display:flex;flex-direction:column;align-items:center;line-height:18px;margin-left:13px}
.not{position:relative;margin-left:17px;width:25px;height:20px}
.not b{position:absolute;left:7px;top:8px;width:15px;height:15px;border-radius:50%;border:1px solid #999;background:#3a3735;font-size:11px;line-height:15px;text-align:center;font-weight:400}
.end{margin-left:auto;width:1px;height:40px;background:#777;margin-right:4px}
</style>
<div class="start"><ui-icon name="win10" w="16"></ui-icon></div>
<div class="se"><ui-icon name="search10" w="17" style="margin:0 12px 0 10px"></ui-icon><fit-text w="128">Type here to search</fit-text><ui-icon name="saucer" w="72" h="38"></ui-icon></div>
<div class="tv"><ui-icon name="taskview" w="17" h="16"></ui-icon></div>
<div class="apps">
<div class="app"><ui-icon name="edge" w="24"></ui-icon></div>
<div class="app run"><ui-icon name="folder10" w="23" h="19"></ui-icon></div>
<div class="app"><ui-icon name="store10" w="23"></ui-icon></div>
<div class="app"><ui-icon name="mail" w="24" h="22"></ui-icon></div>
<div class="app"><ui-icon name="firefox" w="23"></ui-icon></div>
<div class="app"><ui-icon name="chrome" w="26"></ui-icon></div>
<div class="app run"><ui-icon name="chrome2" w="28"></ui-icon></div>
<div class="app run on"><ui-icon name="teams" w="24" h="22"></ui-icon></div>
<div class="app run"><ui-icon name="settings10" w="19"></ui-icon></div>
<div class="app run"><ui-icon name="notepad10" w="23"></ui-icon></div>
<div class="app run"><ui-icon name="cmd" w="23" h="20"></ui-icon></div>
<div class="app run"><ui-icon name="vs" w="24"></ui-icon></div>
</div>
<div class="tray"><div class="w"><b>1</b></div><fit-text w="29" style="margin-left:9px;font-size:13px">32°C</fit-text>
<ui-icon name="chevup" w="12" h="8" style="margin-left:26px"></ui-icon><ui-icon name="meet" w="12" h="16" style="margin-left:12px"></ui-icon><ui-icon name="micw" w="12" h="17" style="margin-left:11px"></ui-icon><ui-icon name="sync" w="17" h="16" style="margin-left:11px"></ui-icon><ui-icon name="plug" w="16" h="13" style="margin-left:7.500px"></ui-icon><ui-icon name="wifi10" w="13" style="margin-left:11px"></ui-icon><ui-icon name="vol" w="17" h="14" style="margin-left:8px"></ui-icon><fit-text w="23" style="margin-left:9px">ENG</fit-text>
<div class="clock"><fit-text w="48">12:49 PM</fit-text><fit-text w="58">19-10-2023</fit-text></div>
<div class="not"><ui-icon name="note" w="16" h="15"></ui-icon><b>1</b></div></div>
<div class="end"></div>`);

define('meeting-app', `<style>
:host{display:flex;flex-direction:column;width:1366px;height:768px;background:#1f1f1f;overflow:hidden}
main{display:flex;height:615px}
.stage{display:flex;width:1111px;height:615px;margin-left:5px;background:#1c1b1d}
</style><window-bar></window-bar><meeting-toolbar></meeting-toolbar><main><div class="stage"><shared-screen></shared-screen></div><roster-panel></roster-panel></main><host-taskbar></host-taskbar>`);
</script>
</body>
</html>
